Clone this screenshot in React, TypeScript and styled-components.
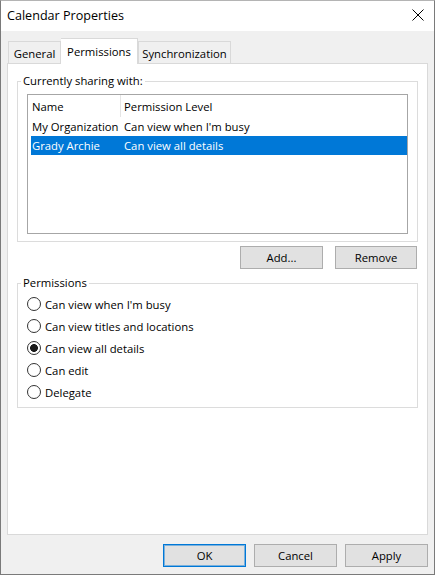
import React, { useState } from 'react'
import styled, { createGlobalStyle } from 'styled-components'

const FONT = `'Open Sans', 'Noto Sans', 'Liberation Sans', sans-serif`

const GlobalStyle = createGlobalStyle`
    html, body {
        margin: 0;
        padding: 0;
        background: #ffffff;
    }
    * {
        box-sizing: border-box;
    }
`

const Window = styled.div`
    width: 435px;
    height: 575px;
    display: flex;
    flex-direction: column;
    background: #f0f0f0;
    border: 1px solid #7a7a7a;
    border-top-color: #b4b4b4;
    font-family: ${FONT};
    font-size: 11.3px;
    color: #000;
`

const TitleBar = styled.div`
    height: 30px;
    flex: none;
    display: flex;
    align-items: center;
    justify-content: space-between;
    background: #ffffff;
    padding: 0 10px 0 6px;
`

const Title = styled.div`
    font-size: 12.6px;
    line-height: 16px;
    margin-top: -1px;
`

const CloseButton = styled.button`
    width: 13px;
    height: 13px;
    padding: 0;
    border: none;
    background: none;
    display: flex;
    align-items: center;
    justify-content: center;
    margin-top: -2px;
`

const Body = styled.div`
    flex: 1;
    display: flex;
    flex-direction: column;
    padding: 7px 6px 0 6px;
    min-height: 0;
`

const TabStrip = styled.div`
    height: 25px;
    flex: none;
    display: flex;
    align-items: flex-end;
    padding-left: 1px;
`

const Tab = styled.div<{ $active?: boolean; $w: number }>`
    width: ${p => p.$w}px;
    height: ${p => (p.$active ? 26 : 22)}px;
    margin-bottom: ${p => (p.$active ? -1 : 0)}px;
    display: flex;
    align-items: center;
    justify-content: center;
    padding-top: ${p => (p.$active ? 0 : 1)}px;
    background: ${p => (p.$active ? '#ffffff' : '#f0f0f0')};
    border: 1px solid #d9d9d9;
    border-bottom: none;
    border-left-width: ${p => (p.$active ? 0 : 1)}px;
    position: relative;
    z-index: ${p => (p.$active ? 1 : 0)};
    white-space: nowrap;
`

const Panel = styled.div`
    flex: 1;
    display: flex;
    flex-direction: column;
    background: #ffffff;
    border: 1px solid #d9d9d9;
    padding: 9px 9px 0 9px;
`

const Group = styled.fieldset<{ $pt: number; $pb: number }>`
    margin: 0;
    border: 1px solid #dcdcdc;
    padding: ${p => p.$pt}px 9px ${p => p.$pb}px 9px;
    min-width: 0;
`

const Legend = styled.legend`
    margin-left: -6px;
    padding: 0 2px;
    line-height: 16px;
`

const ListBox = styled.div`
    height: 140px;
    border: 1px solid #a6a6a6;
    background: #ffffff;
    padding: 0 0 0 3px;
    display: flex;
    flex-direction: column;
`

const ListRow = styled.div<{ $header?: boolean; $selected?: boolean }>`
    display: flex;
    height: ${p => (p.$header ? 22 : 19)}px;
    align-items: center;
    background: ${p => (p.$selected ? '#0078d7' : 'transparent')};
    color: ${p => (p.$selected ? '#ffffff' : '#000000')};
    white-space: nowrap;
`

const NameCell = styled.div<{ $header?: boolean }>`
    width: 90px;
    height: 100%;
    display: flex;
    align-items: center;
    padding-left: 1px;
    border-right: 1px solid ${p => (p.$header ? '#e5e5e5' : 'transparent')};
    overflow: visible;
`

const LevelCell = styled.div`
    flex: 1;
    padding-left: 3px;
`

const ButtonRow = styled.div`
    display: flex;
    justify-content: flex-end;
    gap: 12px;
    padding-right: 1px;
    margin: 4px 0 6px;
`

const Button = styled.button<{ $w: number; $default?: boolean }>`
    width: ${p => p.$w}px;
    height: 23px;
    padding: 0;
    font-family: ${FONT};
    font-size: 11.3px;
    color: #000;
    background: #e1e1e1;
    border: 1px solid ${p => (p.$default ? '#0078d7' : '#adadad')};
    box-shadow: ${p => (p.$default ? 'inset 0 0 0 1px rgba(0, 120, 215, 0.45)' : 'none')};
`

const RadioRow = styled.label`
    display: flex;
    align-items: center;
    gap: 4px;
    height: 22px;
    white-space: nowrap;
`

const Radio = styled.input.attrs({ type: 'radio' })`
    appearance: none;
    -webkit-appearance: none;
    width: 14px;
    height: 14px;
    margin: 0;
    border: 1px solid #333333;
    border-radius: 50%;
    background: #ffffff;
    flex: none;

    &:checked {
        background: radial-gradient(circle, #1a1a1a 0 3.6px, #ffffff 4.2px);
    }
`

const Footer = styled.div`
    height: 39px;
    flex: none;
    display: flex;
    justify-content: flex-end;
    gap: 8px;
    padding: 9px 0 7px 0;
`

const sharing = [
    { name: 'My Organization', level: "Can view when I'm busy" },
    { name: 'Grady Archie', level: 'Can view all details' },
]

const levels = [
    "Can view when I'm busy",
    'Can view titles and locations',
    'Can view all details',
    'Can edit',
    'Delegate',
]

const App = () => {
    const [selected, setSelected] = useState(1)
    const [level, setLevel] = useState(2)

    return (
        <>
            <GlobalStyle />
            <Window>
                <TitleBar>
                    <Title>Calendar Properties</Title>
                    <CloseButton aria-label="Close">
                        <svg width="12" height="12" viewBox="0 0 12 12">
                            <path d="M0.5 0.5 L11.5 11.5 M11.5 0.5 L0.5 11.5" stroke="#000" strokeWidth="1" />
                        </svg>
                    </CloseButton>
                </TitleBar>
                <Body>
                    <TabStrip>
                        <Tab $w={53}>General</Tab>
                        <Tab $w={77} $active>Permissions</Tab>
                        <Tab $w={93}>Synchronization</Tab>
                    </TabStrip>
                    <Panel>
                        <Group $pt={5} $pb={7}>
                            <Legend>Currently sharing with:</Legend>
                            <ListBox>
                                <ListRow $header>
                                    <NameCell $header>Name</NameCell>
                                    <LevelCell>Permission Level</LevelCell>
                                </ListRow>
                                {sharing.map((s, i) => (
                                    <ListRow key={s.name} $selected={i === selected} onClick={() => setSelected(i)}>
                                        <NameCell>{s.name}</NameCell>
                                        <LevelCell>{s.level}</LevelCell>
                                    </ListRow>
                                ))}
                            </ListBox>
                        </Group>
                        <ButtonRow>
                            <Button $w={83}>Add...</Button>
                            <Button $w={82}>Remove</Button>
                        </ButtonRow>
                        <Group $pt={2} $pb={4}>
                            <Legend>Permissions</Legend>
                            {levels.map((l, i) => (
                                <RadioRow key={l}>
                                    <Radio name="level" checked={i === level} onChange={() => setLevel(i)} />
                                    {l}
                                </RadioRow>
                            ))}
                        </Group>
                    </Panel>
                    <Footer>
                        <Button $w={83} $default>OK</Button>
                        <Button $w={83}>Cancel</Button>
                        <Button $w={83}>Apply</Button>
                    </Footer>
                </Body>
            </Window>
        </>
    )
}

export default App
